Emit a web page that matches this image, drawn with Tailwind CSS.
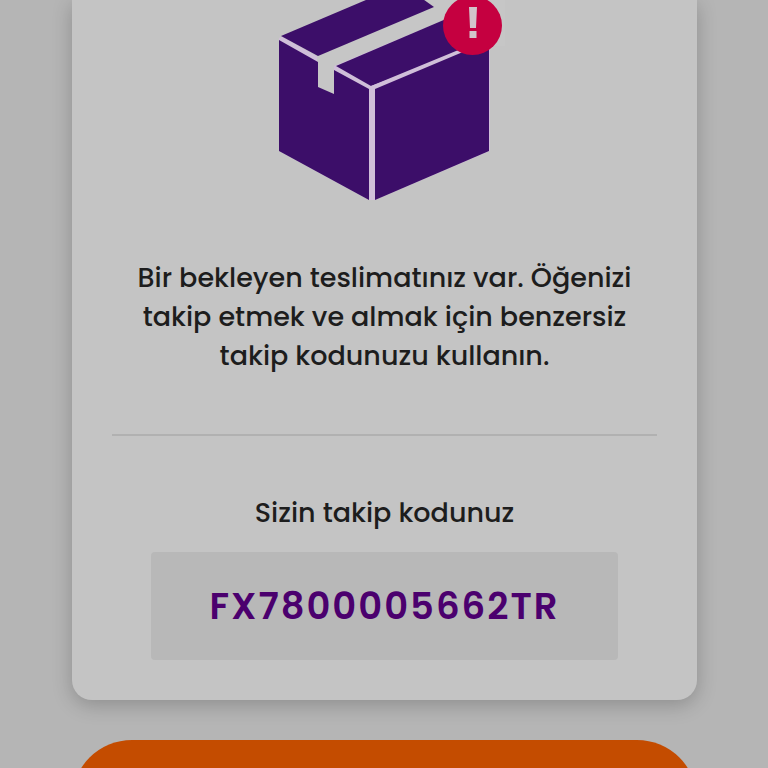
<!DOCTYPE html>
<html lang="tr">
<head>
<meta charset="utf-8">
<meta name="viewport" content="width=device-width, initial-scale=1">
<title>Teslimat takibi</title>
<script src="https://cdn.jsdelivr.net/npm/@tailwindcss/browser@4"></script>
</head>
<body class="h-screen overflow-hidden bg-[#b5b5b5] font-['Poppins','Inter',sans-serif] text-[#1d1d1d]">
<main class="flex flex-col gap-10 pr-[71px] pl-[72px]">
  <section class="flex flex-col items-center rounded-b-[20px] bg-[#c4c4c4] px-10 pb-10 text-center shadow-[0_5px_20px_rgba(0,0,0,0.22)]">
    <svg class="h-[210px] w-[240px]" viewBox="265 0 240 210" role="img" aria-label="Bekleyen paket">
      <path fill="#d0bfd9" d="M279 38 372 0 446 0 490 20V151L375 200H369L279 151Z"/>
      <path fill="#c6c6c6" d="M264 0H369L281 36 318 57V87L334 94V64L445 20V0H505V0H440Z"/>
      <path fill="#c6c6c6" d="M317 55 434 6 446 0H505V46H490L446 19 334 66V94L318 87Z"/>
      <path fill="#3c0e69" d="M281 36 373-3H420L434 7 318 56Z"/>
      <path fill="#3c0e69" d="M336 66 446 19 490 42 371 86Z"/>
      <path fill="#d0bfd9" d="M371 86 490 37V43L375 91V200H369V91Z"/>
      <path fill="#3c0e69" d="M279 40 318 62V87L334 94V70L369 89V200L279 151Z"/>
      <path fill="#3c0e69" d="M375 89 489 41V151L375 200Z"/>
      <circle cx="472.500" cy="25.500" r="29.500" fill="#c50040"/>
      <path fill="#d2c5ca" d="M469 7H477L476 28H470ZM469.500 31H476.500V38H469.500Z"/>
    </svg>
    <p class="mt-12 text-[27px] leading-[39px] font-medium">Bir bekleyen teslimatınız var. Öğenizi takip etmek ve almak için benzersiz takip kodunuzu kullanın.</p>
    <hr class="mt-[59px] w-full border-t-2 border-[#b1b1b1]">
    <h2 class="mt-14 text-[27px] leading-[42px] font-medium">Sizin takip kodunuz</h2>
    <div class="mt-[18px] w-6/7 rounded-sm bg-[#b8b8b8] py-8">
      <strong class="block text-[37px] leading-[44px] font-semibold tracking-[2px] text-[#4b006e]">FX7800005662TR</strong>
    </div>
  </section>
  <button type="button" aria-label="Teslimatı takip et" class="h-[120px] w-full rounded-full bg-[#c44c00]"></button>
</main>
</body>
</html>
